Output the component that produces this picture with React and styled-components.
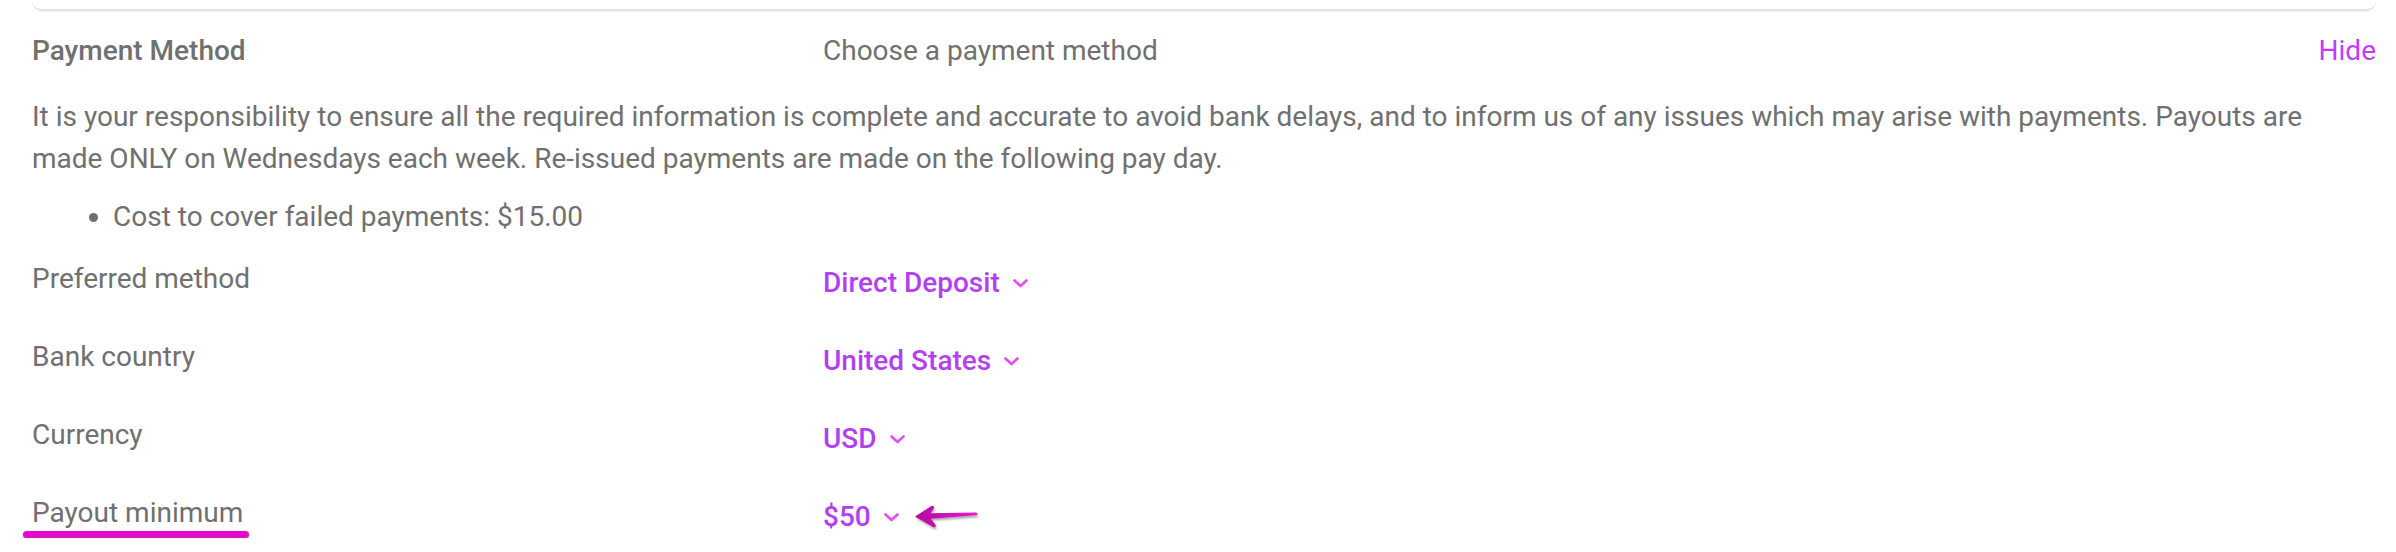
import React from "react";
import styled, { createGlobalStyle } from "styled-components";

const GlobalStyle = createGlobalStyle`
  body {
    margin: 0;
    background: #ffffff;
    font-family: Roboto, "Liberation Sans", sans-serif;
  }
`;

const rows = [
  { label: "Preferred method", value: "Direct Deposit" },
  { label: "Bank country", value: "United States" },
  { label: "Currency", value: "USD" },
  { label: "Payout minimum", value: "$50", marked: true },
];

function Chevron() {
  return (
    <svg width="15" height="9" viewBox="0 0 15 9" fill="none">
      <polyline
        points="1.5,1.5 7.5,7 13.5,1.5"
        stroke="#e54cf2"
        strokeWidth="2.6"
        strokeLinecap="round"
        strokeLinejoin="round"
      />
    </svg>
  );
}

function Arrow() {
  return (
    <svg width="68" height="28" viewBox="0 0 68 28">
      <defs>
        <linearGradient id="arrowFill" x1="0" y1="0" x2="1" y2="0">
          <stop offset="0" stopColor="#b5069f" />
          <stop offset="1" stopColor="#e21fd2" />
        </linearGradient>
        <filter id="arrowShadow" x="-10%" y="-30%" width="130%" height="180%">
          <feDropShadow dx="1" dy="2" stdDeviation="1.2" floodColor="#000" floodOpacity="0.35" />
        </filter>
      </defs>
      <path
        d="M3 13.5 L19 3.2 Q22.5 1.6 22 5 L18.5 10.2 L64 9.6 Q66.5 10.6 64.5 12.2 L18.8 15.8 L23.5 21.8 Q24.6 25 21 24 Z"
        fill="url(#arrowFill)"
        filter="url(#arrowShadow)"
      />
    </svg>
  );
}

export default function App() {
  return (
    <>
      <GlobalStyle />
      <Page>
        <CardEdge />
        <Header>
          <Title>Payment Method</Title>
          <Subtitle>Choose a payment method</Subtitle>
          <HideLink href="#">Hide</HideLink>
        </Header>
        <Notice>
          It is your responsibility to ensure all the required information is complete and
          accurate to avoid bank delays, and to inform us of any issues which may arise with
          payments. Payouts are made ONLY on Wednesdays each week. Re-issued payments are made
          on the following pay day.
        </Notice>
        <Bullets>
          <li>Cost to cover failed payments: $15.00</li>
        </Bullets>
        <Fields>
          {rows.map((row) => (
            <FieldRow key={row.label}>
              <FieldLabel $marked={row.marked}>{row.label}</FieldLabel>
              <Select>
                <span>{row.value}</span>
                <Chevron />
                {row.marked && (
                  <Pointer>
                    <Arrow />
                  </Pointer>
                )}
              </Select>
            </FieldRow>
          ))}
        </Fields>
      </Page>
    </>
  );
}

const Page = styled.div`
  padding: 0 20px 0 32px;
  color: #707070;
  font-size: 28px;
  line-height: 42px;
`;

const CardEdge = styled.div`
  height: 9px;
  border-bottom: 2px solid #e3e3e3;
  border-radius: 0 0 10px 10px;
  box-shadow: 0 1px 1px rgba(0, 0, 0, 0.05);
`;

const Header = styled.div`
  display: grid;
  grid-template-columns: 791px 1fr auto;
  align-items: center;
  margin-top: 19px;
`;

const Title = styled.div`
  font-weight: 500;
`;

const Subtitle = styled.div``;

const HideLink = styled.a`
  color: #c03dff;
  text-decoration: none;
`;

const Notice = styled.p`
  margin: 24px 0 0;
`;

const Bullets = styled.ul`
  margin: 16px 0 0;
  padding-left: 81px;
`;

const Fields = styled.div`
  display: flex;
  flex-direction: column;
  gap: 32px;
  margin-top: 20px;
`;

const FieldRow = styled.div`
  display: grid;
  grid-template-columns: 791px 1fr;
  align-items: start;
`;

const FieldLabel = styled.div`
  position: relative;
  justify-self: start;
  ${(p) =>
    p.$marked &&
    `
    &::after {
      content: "";
      position: absolute;
      left: -9px;
      right: -6px;
      bottom: -4px;
      height: 7px;
      border-radius: 4px;
      background: #e10bc9;
      box-shadow: 0 1px 2px rgba(0, 0, 0, 0.3);
    }
  `}
`;

const Select = styled.div`
  display: flex;
  align-items: center;
  gap: 13px;
  padding-top: 4px;
  color: #b33ff3;
  font-weight: 500;
  cursor: pointer;
`;

const Pointer = styled.span`
  display: flex;
`;
